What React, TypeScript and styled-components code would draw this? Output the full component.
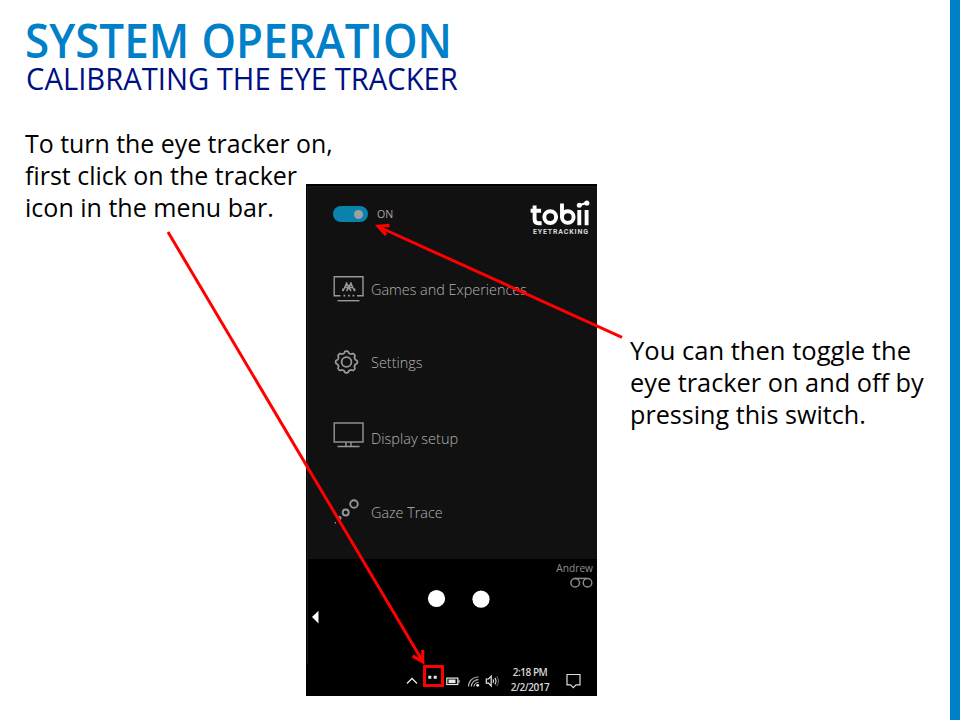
import React from 'react';
import styled, { createGlobalStyle } from 'styled-components';

const GlobalStyle = createGlobalStyle`
  html, body { margin: 0; padding: 0; background: #fff; }
  body { width: 960px; height: 720px; overflow: hidden; font-family: "Open Sans", "Noto Sans", sans-serif; }
  svg { display: block; flex: none; }
`;

const Slide = styled.div`
  position: relative;
  display: grid;
  grid-template-rows: 94px 1fr;
  box-sizing: border-box;
  width: 960px;
  height: 720px;
  border-right: 10px solid #0080c9;
`;

const Header = styled.header`
  padding: 18px 0 0 24px;
`;

const Fit = styled.span<{ $scale: number }>`
  display: block;
  width: max-content;
  white-space: nowrap;
  transform: scaleX(${(p) => p.$scale});
  transform-origin: 0 50%;
`;

const Title = styled.h1`
  margin: 0;
  padding-left: 1px;
  font-size: 47px;
  line-height: 44px;
  font-weight: 600;
  word-spacing: 1px;
  color: #0080c9;
`;

const Subtitle = styled.h2`
  margin: 0;
  padding-left: 1.5px;
  font-size: 30.5px;
  line-height: 32px;
  font-weight: 400;
  color: #000f82;
`;

const Body = styled.main`
  display: grid;
  grid-template-columns: 306px 291px 1fr;
  align-items: start;
`;

const Note = styled.p<{ $top: number; $left: number }>`
  margin: ${(p) => p.$top}px 0 0 ${(p) => p.$left}px;
  font-size: 26px;
  line-height: 32px;
  color: #000;
`;

const Panel = styled.section`
  display: flex;
  flex-direction: column;
  box-sizing: border-box;
  height: 512px;
  margin-top: 90px;
  padding-top: 2px;
  background: #000;
  color: #9a9a9a;
`;

const Menu = styled.div`
  box-sizing: border-box;
  height: 373px;
  margin-left: 1px;
  background: #111;
  border-left: 1px solid #1d2023;
  border-top: 1px solid #1a1a1a;
`;

const MenuTop = styled.div`
  display: flex;
  justify-content: space-between;
  height: 64.5px;
  padding: 0 7px 0 25px;
`;

const SwitchRow = styled.div`
  display: flex;
  align-items: center;
  gap: 8.5px;
  height: 54px;
  font-size: 10px;
  color: #a8a8a8;
`;

const Switch = styled.div`
  display: flex;
  align-items: center;
  justify-content: flex-end;
  box-sizing: border-box;
  width: 35px;
  height: 16px;
  padding-right: 5px;
  border-radius: 8px;
  background: #0982ae;
`;

const Knob = styled.div`
  width: 9px;
  height: 9px;
  border-radius: 50%;
  background: #a0a0a0;
`;

const Brand = styled.div`
  display: flex;
  flex-direction: column;
  align-items: flex-start;
  width: 60px;
  padding-top: 13px;
  color: #fff;
`;

const BrandTag = styled.div`
  padding-left: 3px;
  font-family: "Roboto", sans-serif;
  font-size: 7px;
  font-weight: 700;
  line-height: 8px;
  letter-spacing: 0.85px;
  color: #d8d8d8;
`;

const Item = styled.div<{ $height: number }>`
  display: grid;
  grid-template-columns: 38.5px 1fr;
  align-items: center;
  height: ${(p) => p.$height}px;
  padding-left: 24.5px;
  font-size: 15px;
  font-weight: 300;
  color: #b4b4b4;
`;

const Preview = styled.div`
  display: grid;
  grid-template-columns: 1fr 60px;
  height: 105px;
  margin-left: 1px;
  border-left: 1px solid #1d2023;
`;

const User = styled.div`
  display: flex;
  flex-direction: column;
  align-items: flex-end;
  padding-right: 4px;
  font-size: 10.2px;
  line-height: 18px;
  color: #8f8f8f;
`;

const Taskbar = styled.div`
  display: flex;
  align-items: center;
  height: 32px;
  padding-left: 98px;
`;

const Clock = styled.div`
  width: 50px;
  font-size: 10px;
  font-weight: 600;
  line-height: 15.5px;
  text-align: center;
  white-space: nowrap;
  letter-spacing: -0.45px;
  color: #d8d8d8;
`;

const Arrows = styled.svg`
  position: absolute;
  left: 0;
  top: 0;
  pointer-events: none;
`;

const stroke = { fill: 'none', stroke: '#989898', strokeWidth: 1.4 };

const GamesIcon = () => (
  <svg width="32" height="28" viewBox="0 0 32 28" {...stroke}>
    <path d="M7.5 20.7H1.2V1.7H30V20.7H24" />
    <path d="M4.5 25.7H26.5" />
    <path d="M10.5 20.7h1.8M15 20.7h1.8M19.5 20.7h1.8" strokeWidth="1.8" />
    <path d="M10 16L14 7.5M13.5 16L18.5 7.5M17.5 7.5L21.5 16M13 7.5L18 16M11 12.5H20.5" strokeWidth="1.5" />
    <path d="M9.8 13.5V16.2M21.7 13.5V16.2" />
  </svg>
);

const gearPath = (() => {
  const pts: string[] = [];
  for (let i = 0; i <= 120; i++) {
    const a = (i / 120) * Math.PI * 2;
    const r = 9.9 + 0.95 * Math.tanh(2 * Math.cos(a * 8));
    pts.push(`${(13.5 + r * Math.sin(a)).toFixed(2)} ${(12 - r * Math.cos(a)).toFixed(2)}`);
  }
  return `M${pts.join('L')}Z`;
})();

const SettingsIcon = () => (
  <svg width="32" height="25" viewBox="0 0 32 25" {...stroke} strokeWidth={1.8}>
    <path d={gearPath} />
    <circle cx="13.5" cy="12" r="4.9" />
  </svg>
);

const DisplayIcon = () => (
  <svg width="32" height="34" viewBox="0 0 32 34" {...stroke}>
    <rect x="1.2" y="2" width="28.8" height="19" />
    <path d="M13 21v4M18 21v4M4.5 25.5H26.5" />
  </svg>
);

const GazeIcon = () => (
  <svg width="32" height="28" viewBox="0 0 32 28" {...stroke}>
    <circle cx="21" cy="6" r="3.8" strokeWidth="1.9" />
    <circle cx="12.7" cy="14.5" r="3" strokeWidth="1.9" />
    <circle cx="6.6" cy="20" r="1.3" />
    <path d="M1.8 24.8h1.2" />
  </svg>
);

const TobiiLogo = () => (
  <svg width="60" height="28" viewBox="0 0 60 28" fill="none" stroke="#fff" strokeWidth="3.9">
    <path d="M4.6 5.5v13.7q0 4 4 4h3M.6 10.8h10.5" />
    <circle cx="20.2" cy="17.1" r="5.9" />
    <path d="M32 3.5V18" />
    <circle cx="37.8" cy="17.1" r="5.8" />
    <path d="M49.3 10v15.2M56.6 10v15.2" />
    <path d="M49.5 5.2L56.8 2.8" strokeWidth="2" />
    <circle cx="49.3" cy="5.2" r="2.5" fill="#fff" stroke="none" />
    <circle cx="56.8" cy="3" r="2.6" fill="#fff" stroke="none" />
  </svg>
);

const GlassesIcon = () => (
  <svg width="24" height="12" viewBox="0 0 24 12" fill="none" stroke="#8a8a8a" strokeWidth="1.5">
    <circle cx="6.2" cy="5.8" r="4.3" />
    <circle cx="18.5" cy="5.8" r="4.3" />
    <path d="M6 1.4H18" />
  </svg>
);

const EyesView = () => (
  <svg width="229" height="105" viewBox="0 0 229 105" fill="#fff">
    <circle cx="128.5" cy="39.5" r="8.6" />
    <circle cx="173" cy="40.2" r="8.6" />
    <path d="M4 58L10.5 51.8V64.4Z" />
  </svg>
);

const TrayIcons = () => (
  <svg width="101" height="32" viewBox="0 0 101 32" fill="none" stroke="#e8e8e8" strokeWidth="1.3">
    <path d="M3 19.5L8 14.5L13 19.5" />
    <path d="M24.3 13.2h3M29.7 13.2h3" strokeWidth="3" />
    <rect x="20.5" y="2.5" width="18" height="19" stroke="#ff0000" strokeWidth="3" />
    <rect x="42.8" y="14.1" width="11" height="6.4" strokeWidth="1.2" />
    <path d="M44.5 17.3h7" strokeWidth="3.6" />
    <path d="M55 15.8v3" strokeWidth="1" />
    <path d="M64.5 22.5A9.5 9.5 0 0 1 74.5 13M67.3 22.5A7 7 0 0 1 74.5 15.7M70 22.5A4.4 4.4 0 0 1 74.5 18.5" strokeWidth="1.2" stroke="#b4b4b4" />
    <circle cx="73.7" cy="21.3" r="1.4" fill="#eee" stroke="none" />
    <path d="M82.3 15h2.2L87.2 12.2v9.8L84.5 19.2H82.3Z" strokeWidth="1.2" />
    <path d="M89 15.3q1.2 1.8 0 3.7M90.9 13.9q2.2 3.2 0 6.5" strokeWidth="1.1" />
    <path d="M92.8 12.3q3.2 4.8 0 9.7" strokeWidth="1" stroke="#777" />
  </svg>
);

const ActionIcon = () => (
  <svg width="39" height="32" viewBox="0 0 39 32" fill="none" stroke="#ddd" strokeWidth="1.2">
    <path d="M12 10.5h13v10.3h-4l-2.7 2.8-2.7-2.8h-3.6Z" />
  </svg>
);

const menuItems = [
  { label: 'Games and Experiences', Icon: GamesIcon, scale: 0.96, height: 74 },
  { label: 'Settings', Icon: SettingsIcon, scale: 0.965, height: 73 },
  { label: 'Display setup', Icon: DisplayIcon, scale: 0.968, height: 78 },
  { label: 'Gaze Trace', Icon: GazeIcon, scale: 0.957, height: 71 },
];

export default function App() {
  return (
    <>
      <GlobalStyle />
      <Slide>
        <Header>
          <Title><Fit $scale={0.935}>SYSTEM OPERATION</Fit></Title>
          <Subtitle><Fit $scale={0.958}>CALIBRATING THE EYE TRACKER</Fit></Subtitle>
        </Header>
        <Body>
          <Note $top={33} $left={24.5}>
            <Fit $scale={0.957}>To turn the eye tracker on,</Fit>
            <Fit $scale={0.96}>first click on the tracker</Fit>
            <Fit $scale={0.963}>icon in the menu bar.</Fit>
          </Note>
          <Panel>
            <Menu>
              <MenuTop>
                <SwitchRow>
                  <Switch><Knob /></Switch>
                  <Fit $scale={1.06}>ON</Fit>
                </SwitchRow>
                <Brand>
                  <TobiiLogo />
                  <BrandTag>EYETRACKING</BrandTag>
                </Brand>
              </MenuTop>
              {menuItems.map(({ label, Icon, scale, height }) => (
                <Item key={label} $height={height}>
                  <Icon />
                  <Fit $scale={scale}>{label}</Fit>
                </Item>
              ))}
            </Menu>
            <Preview>
              <EyesView />
              <User>
                <span>Andrew</span>
                <GlassesIcon />
              </User>
            </Preview>
            <Taskbar>
              <TrayIcons />
              <Clock>
                2:18 PM
                <br />
                2/2/2017
              </Clock>
              <ActionIcon />
            </Taskbar>
          </Panel>
          <Note $top={240} $left={33}>
            <Fit $scale={0.983}>You can then toggle the</Fit>
            <Fit $scale={0.974}>eye tracker on and off by</Fit>
            <Fit $scale={0.967}>pressing this switch.</Fit>
          </Note>
        </Body>
        <Arrows width="950" height="720" viewBox="0 0 950 720" fill="none" stroke="#ff0000" strokeWidth="3">
          <path d="M168 232L422.5 661" />
          <path d="M412.5 656L422.7 661.7L422.8 650" strokeWidth="3.2" />
          <path d="M622 337.3L379 227" />
          <path d="M389.5 225.3L378.2 226.3L386 235" strokeWidth="3.2" />
        </Arrows>
      </Slide>
    </>
  );
}
